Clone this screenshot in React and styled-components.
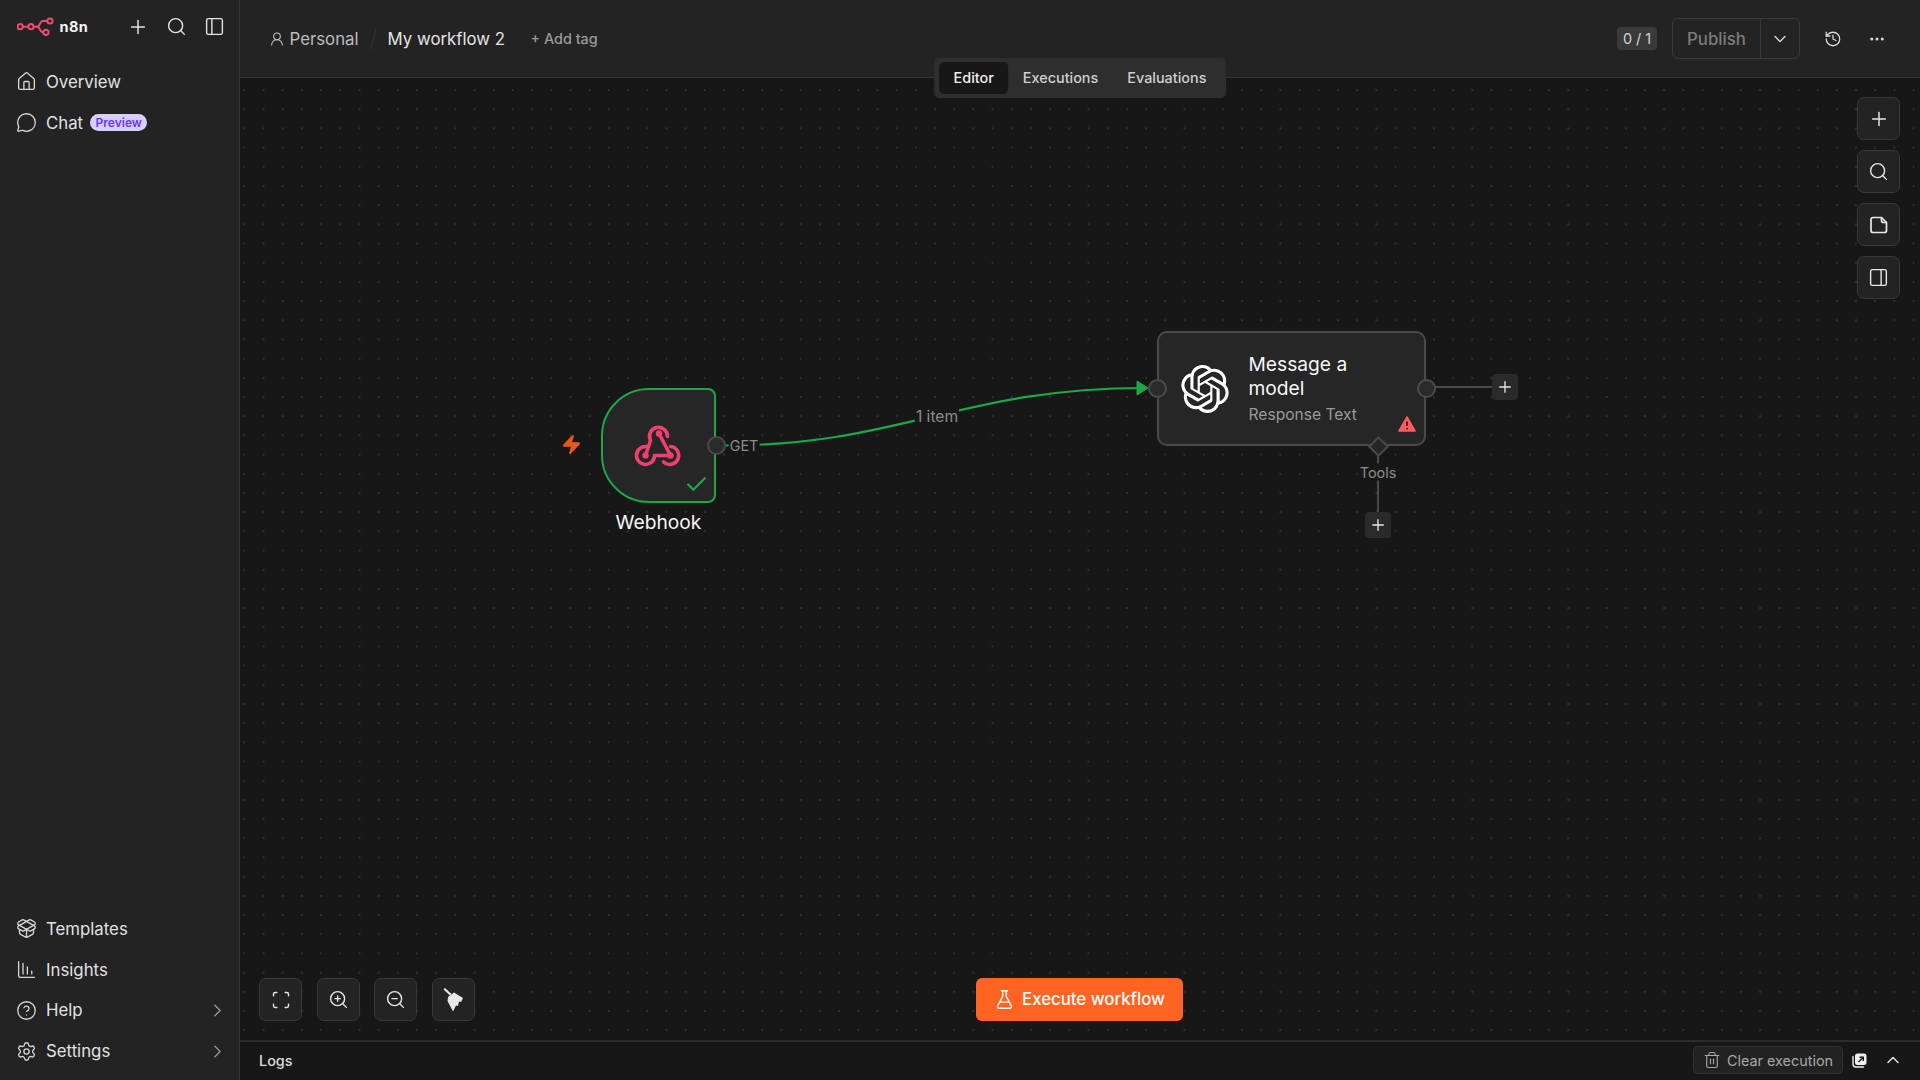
import React from 'react';
import styled, { createGlobalStyle } from 'styled-components';
import {
  House, MessageCircle, PackageOpen, ChartColumnDecreasing, CircleHelp, Settings, ChevronRight,
  Plus, Search, PanelLeft, PanelRight, UserRound, History, Ellipsis, ChevronDown, ChevronUp,
  Scan, ZoomIn, ZoomOut, FlaskConical, Trash2, Check, Zap,
} from 'lucide-react';
import { SiOpenai } from 'react-icons/si';

const GlobalStyle = createGlobalStyle`
  html, body { margin: 0; padding: 0; height: 100%; background: #171717; }
  #root { height: 100%; }
  * { box-sizing: border-box; }
  body { font-family: Inter, "Liberation Sans", sans-serif; color: #f0f0f0; }
`;

const Shell = styled.div`
  display: flex;
  width: 1920px;
  height: 1080px;
  overflow: hidden;
`;

const Sidebar = styled.aside`
  width: 240px;
  flex: none;
  display: flex;
  flex-direction: column;
  padding-bottom: 8.5px;
  background: #232323;
  border-right: 1px solid #333;
`;

const Brand = styled.div`
  display: flex;
  align-items: center;
  height: 53px;
  padding: 0 5px 0 17px;
  color: #e4e4e4;
`;

const BrandName = styled.span`
  font-size: 14.5px;
  font-weight: 700;
  letter-spacing: 0.4px;
  color: #f4f4f4;
  margin-left: 5.5px;
  flex: 1;
`;

const BrandTool = styled.span`
  display: flex;
  width: 38.5px;
  justify-content: center;
`;

const NavList = styled.nav`
  display: flex;
  flex-direction: column;
  margin-top: ${(p) => p.$top || 0}px;
`;

const Spacer = styled.div`
  flex: 1;
`;

const NavItem = styled.div`
  display: flex;
  align-items: center;
  height: 40.8px;
  padding: 0 11px 0 15.5px;
  gap: 9.5px;
  font-size: 16.8px;
  color: #e2e2e2;
  svg { flex: none; color: #d6d6d6; }
`;

const NavLabel = styled.span`
  flex: ${(p) => (p.$grow ? 1 : 'none')};
`;

const PreviewPill = styled.span`
  font-size: 12px;
  font-weight: 600;
  line-height: 17px;
  padding: 0 5.5px;
  margin-left: -2.5px;
  border-radius: 9px;
  background: #d9cfff;
  color: #6b36f5;
`;

const Main = styled.div`
  flex: 1;
  min-width: 0;
  display: flex;
  flex-direction: column;
  position: relative;
`;

const Header = styled.header`
  height: 78px;
  flex: none;
  display: flex;
  align-items: center;
  padding: 0 34px 0 29px;
  background: #232323;
  border-bottom: 1px solid #333;
`;

const Crumb = styled.span`
  display: flex;
  align-items: center;
  gap: 4.5px;
  font-size: 16.8px;
  color: ${(p) => p.$color || '#bcbcbc'};
  svg { color: #c4c4c4; }
`;

const Slash = styled.span`
  width: 1px;
  height: 22px;
  margin: 0 14px;
  background: #333;
  transform: rotate(14deg);
`;

const AddTag = styled.span`
  margin-left: 25.5px;
  font-size: 14.4px;
  font-weight: 500;
  color: #9a9a9a;
`;

const HeaderEnd = styled.div`
  margin-left: auto;
  display: flex;
  align-items: center;
`;

const Counter = styled.span`
  width: 40px;
  height: 23px;
  display: flex;
  align-items: center;
  justify-content: center;
  border-radius: 4px;
  background: #3a3a3a;
  font-size: 14.4px;
  color: #d4d4d4;
  margin-right: 15px;
`;

const PublishGroup = styled.div`
  display: flex;
  height: 41px;
  width: 128px;
  border: 1px solid #3a3a3a;
  border-radius: 6px;
`;

const PublishLabel = styled.span`
  width: 88px;
  display: flex;
  align-items: center;
  justify-content: center;
  border-right: 1px solid #3a3a3a;
  font-size: 16.8px;
  font-weight: 500;
  color: #7c7c7c;
`;

const PublishCaret = styled.span`
  flex: 1;
  display: flex;
  align-items: center;
  justify-content: center;
  color: #d4d4d4;
`;

const HeaderIcon = styled.span`
  display: flex;
  margin-left: ${(p) => p.$left}px;
  color: #dcdcdc;
`;

const ViewTabs = styled.div`
  position: absolute;
  top: 58px;
  left: 50%;
  transform: translateX(-50%);
  z-index: 5;
  display: flex;
  align-items: center;
  height: 40px;
  padding: 0 5px;
  border-radius: 5px;
  background: #2e2e2e;
`;

const ViewTab = styled.span`
  height: 32px;
  padding: 0 14.5px 2px;
  display: flex;
  align-items: center;
  border-radius: 5px;
  font-size: 14.4px;
  font-weight: 500;
  color: ${(p) => (p.$active ? '#f0f0f0' : '#d0d0d0')};
  background: ${(p) => (p.$active ? '#171717' : 'transparent')};
`;

const Canvas = styled.main`
  flex: 1;
  position: relative;
  overflow: hidden;
  background-color: #171717;
  background-image: radial-gradient(circle at center, #363636 0.6px, transparent 1px);
  background-size: 19.2px 19.2px;
  background-position: -5.3px 2.4px;
`;

const Edges = styled.svg`
  position: absolute;
  inset: 0;
  width: 100%;
  height: 100%;
`;

const ToolColumn = styled.div`
  position: absolute;
  top: 19px;
  right: 20px;
  display: flex;
  flex-direction: column;
  gap: 10px;
`;

const ToolRow = styled.div`
  position: absolute;
  left: 19px;
  bottom: 19px;
  display: flex;
  gap: 14.7px;
`;

const ToolButton = styled.span`
  width: 43px;
  height: 43px;
  display: flex;
  align-items: center;
  justify-content: center;
  border: 1px solid #383838;
  border-radius: 7px;
  background: #232323;
  color: #e8e8e8;
`;

const ExecuteButton = styled.span`
  position: absolute;
  left: 736px;
  bottom: 19px;
  width: 207px;
  height: 43px;
  display: flex;
  align-items: center;
  justify-content: center;
  gap: 7px;
  padding-bottom: 1px;
  border-radius: 6px;
  background: #ff6423;
  color: #fff;
  font-size: 16.8px;
  font-weight: 500;
`;

const TriggerBolt = styled.span`
  position: absolute;
  left: 321px;
  top: 356px;
  display: flex;
  color: #e8591c;
`;

const WebhookNode = styled.div`
  position: absolute;
  left: 361px;
  top: 310px;
  width: 115px;
  height: 115px;
  display: flex;
  align-items: center;
  justify-content: center;
  border: 2.4px solid #1ca84a;
  border-radius: 48px 8px 8px 48px;
  background: #262626;
`;

const NodeLabel = styled.span`
  position: absolute;
  left: 361px;
  top: 432px;
  width: 115px;
  text-align: center;
  font-size: 19.2px;
  font-weight: 400;
  color: #f6f6f6;
  white-space: nowrap;
`;

const NodeCheck = styled.span`
  position: absolute;
  right: 5px;
  bottom: 4px;
  display: flex;
  color: #1ca84a;
`;

const ModelNode = styled.div`
  position: absolute;
  left: 917px;
  top: 253px;
  width: 269px;
  height: 115px;
  display: flex;
  align-items: center;
  padding: 0 16px 0 22px;
  gap: 19.5px;
  border: 2.4px solid #4a4a4a;
  border-radius: 10px;
  background: #262626;
  color: #fff;
`;

const NodeText = styled.div`
  display: flex;
  flex-direction: column;
  padding-top: 2px;
`;

const NodeTitle = styled.span`
  font-size: 19.2px;
  line-height: 24px;
  font-weight: 400;
  color: #f6f6f6;
`;

const NodeSub = styled.span`
  margin-top: 3px;
  font-size: 15.6px;
  line-height: 24px;
  color: #9a9a9a;
`;

const WarnBadge = styled.span`
  position: absolute;
  right: 8px;
  bottom: 12px;
  display: flex;
`;

const Handle = styled.span`
  position: absolute;
  left: ${(p) => p.$x - 9.5}px;
  top: ${(p) => p.$y - 9.5}px;
  width: 19px;
  height: 19px;
  border: 2px solid #4a4a4a;
  border-radius: 50%;
  background: #2a2a2a;
`;

const Diamond = styled.span`
  position: absolute;
  left: ${(p) => p.$x - 7.5}px;
  top: ${(p) => p.$y - 7.5}px;
  width: 15px;
  height: 15px;
  border: 2px solid #4a4a4a;
  background: #262626;
  transform: rotate(45deg);
`;

const EdgeLabel = styled.span`
  position: absolute;
  left: ${(p) => p.$x}px;
  top: ${(p) => p.$y}px;
  transform: translate(-50%, -50%);
  font-size: ${(p) => p.$size || 14.4}px;
  padding: 0 1px;
  color: #8c8c8c;
  background: #171717;
  white-space: nowrap;
`;

const AddNode = styled.span`
  position: absolute;
  left: ${(p) => p.$x}px;
  top: ${(p) => p.$y}px;
  width: 26px;
  height: 26px;
  display: flex;
  align-items: center;
  justify-content: center;
  border-radius: 4px;
  background: #2a2a2a;
  color: #e8e8e8;
`;

const LogsBar = styled.footer`
  height: 40px;
  flex: none;
  display: flex;
  align-items: center;
  padding: 0 17px 2px 19px;
  background: #171717;
  border-top: 2px solid #2b2b2b;
`;

const LogsTitle = styled.span`
  font-size: 14.4px;
  font-weight: 500;
  color: #dcdcdc;
  margin-right: auto;
`;

const ClearButton = styled.span`
  width: 150px;
  height: 28px;
  display: flex;
  align-items: center;
  justify-content: center;
  gap: 6px;
  border: 1px solid #333;
  border-radius: 5px;
  background: #222;
  font-size: 14.4px;
  color: #a8a8a8;
  margin-right: 9px;
`;

const LogsIcon = styled.span`
  display: flex;
  margin-left: ${(p) => p.$left || 0}px;
  color: #e4e4e4;
`;

const Logo = () => (
  <svg width="37" height="20" viewBox="0 0 37 20" fill="none" stroke="#ea4b71" strokeWidth="2">
    <circle cx="3.2" cy="9.7" r="2.6" />
    <circle cx="14" cy="9.7" r="2.6" />
    <circle cx="33" cy="4" r="2.6" />
    <circle cx="29" cy="15.3" r="2.6" />
    <path d="M5.8 9.7h5.6M16.6 9.7h3.4c3.4 0 2.4-5.7 6-5.7h4.4M20 9.7c3.4 0 2.4 5.6 6 5.6h.4" />
  </svg>
);

const WebhookGlyph = () => (
  <svg width="70" height="60" viewBox="-1.5 1 70 60" fill="none" stroke="#f0406f" strokeWidth="3.6" strokeLinecap="round" strokeLinejoin="round">
    <path d="M20 40.5 25 25.5A9 9 0 1 1 42 21.5" />
    <path d="M33.5 18.5 45 40.5" />
    <path d="M21 31.5A9 9 0 1 0 29 40.5H45" />
    <path d="M45 31.5A9 9 0 1 1 38 47" />
    <circle cx="33.5" cy="18.5" r="3.2" fill="#f0406f" stroke="none" />
    <circle cx="20" cy="40.5" r="3.2" fill="#f0406f" stroke="none" />
    <circle cx="45" cy="40.5" r="3.2" fill="#f0406f" stroke="none" />
  </svg>
);

const NoteGlyph = () => (
  <svg width="18" height="18" viewBox="0 0 18 18" fill="none" stroke="currentColor" strokeWidth="1.7" strokeLinejoin="round">
    <path d="M3 1.5h8.5l5 5v8a2 2 0 0 1-2 2H3a2 2 0 0 1-2-2v-11a2 2 0 0 1 2-2z" />
    <path d="M11.5 1.5v3a2 2 0 0 0 2 2h3" />
  </svg>
);

const BroomGlyph = () => (
  <svg width="21" height="24" viewBox="0 0 21 24" fill="currentColor">
    <path d="M.5 1.5 2 0l6.5 6-1.5 1.5z" />
    <path d="M5 9 11 4.5 20 10l-2 4-2-.5-1 4.5-2-.5-3 6-5.5-10.5z" />
  </svg>
);

const PopOutGlyph = () => (
  <svg width="15" height="15" viewBox="0 0 15 15">
    <path d="M1 3.5v7.5a3 3 0 0 0 3 3h7.5" fill="none" stroke="#eee" strokeWidth="1.4" strokeLinecap="round" />
    <rect x="3" y="0.5" width="11.5" height="11.5" rx="2.5" fill="#eee" />
    <path d="M6.5 9 11 4.5M7.5 4.2h3.8V8" fill="none" stroke="#171717" strokeWidth="1.4" />
  </svg>
);

const WarnGlyph = () => (
  <svg width="18" height="16" viewBox="0 0 18 16">
    <path d="M9 1 17 15H1z" fill="#ff5a5f" stroke="#ff5a5f" strokeWidth="1.6" strokeLinejoin="round" />
    <path d="M9 5.5v4.5M9 12v1.2" stroke="#262626" strokeWidth="1.8" />
  </svg>
);

const iconProps = { size: 21, strokeWidth: 1.5 };

const topNav = [
  { label: 'Overview', Icon: House },
  { label: 'Chat', Icon: MessageCircle, pill: 'Preview' },
];

const bottomNav = [
  { label: 'Templates', Icon: PackageOpen },
  { label: 'Insights', Icon: ChartColumnDecreasing },
  { label: 'Help', Icon: CircleHelp, more: true },
  { label: 'Settings', Icon: Settings, more: true },
];

const renderNav = ({ label, Icon, pill, more }) => (
  <NavItem key={label}>
    <Icon {...iconProps} />
    <NavLabel $grow={more}>{label}</NavLabel>
    {pill && <PreviewPill>{pill}</PreviewPill>}
    {more && <ChevronRight size={21} strokeWidth={1.5} color="#9a9a9a" />}
  </NavItem>
);

export default function App() {
  return (
    <>
      <GlobalStyle />
      <Shell>
        <Sidebar>
          <Brand>
            <Logo />
            <BrandName>n8n</BrandName>
            <BrandTool><Plus size={22} strokeWidth={1.6} /></BrandTool>
            <BrandTool><Search size={21} strokeWidth={1.6} /></BrandTool>
            <BrandTool><PanelLeft size={21} strokeWidth={1.6} /></BrandTool>
          </Brand>
          <NavList $top={8.5}>{topNav.map(renderNav)}</NavList>
          <Spacer />
          <NavList>{bottomNav.map(renderNav)}</NavList>
        </Sidebar>
        <Main>
          <Header>
            <Crumb><UserRound size={16} strokeWidth={1.6} />Personal</Crumb>
            <Slash />
            <Crumb $color="#e4e4e4">My workflow 2</Crumb>
            <AddTag>+ Add tag</AddTag>
            <HeaderEnd>
              <Counter>0 / 1</Counter>
              <PublishGroup>
                <PublishLabel>Publish</PublishLabel>
                <PublishCaret><ChevronDown size={20} strokeWidth={1.7} /></PublishCaret>
              </PublishGroup>
              <HeaderIcon $left={24}><History size={18} strokeWidth={1.7} /></HeaderIcon>
              <HeaderIcon $left={26}><Ellipsis size={18} strokeWidth={2} /></HeaderIcon>
            </HeaderEnd>
          </Header>
          <ViewTabs>
            <ViewTab $active>Editor</ViewTab>
            <ViewTab>Executions</ViewTab>
            <ViewTab>Evaluations</ViewTab>
          </ViewTabs>
          <Canvas>
            <Edges>
              <path d="M485 367.5C660 367.5 720 310 905 310" fill="none" stroke="#1ca84a" strokeWidth="2.2" />
              <path d="M897 303 908 310 897 317z" fill="#1ca84a" stroke="#1ca84a" strokeWidth="1" strokeLinejoin="round" />
              <path d="M1195 309H1254M1138 378V436" stroke="#4a4a4a" strokeWidth="2" fill="none" />
            </Edges>
            <TriggerBolt><Zap size={21} fill="currentColor" strokeWidth={1.4} /></TriggerBolt>
            <WebhookNode>
              <WebhookGlyph />
              <NodeCheck><Check size={25} strokeWidth={2.2} /></NodeCheck>
            </WebhookNode>
            <NodeLabel>Webhook</NodeLabel>
            <Handle $x={476} $y={367.5} />
            <EdgeLabel $x={504} $y={366.5}>GET</EdgeLabel>
            <EdgeLabel $x={697} $y={338} $size={15.6}>1 item</EdgeLabel>
            <ModelNode>
              <SiOpenai size={48} />
              <NodeText>
                <NodeTitle>Message a<br />model</NodeTitle>
                <NodeSub>Response Text</NodeSub>
              </NodeText>
              <WarnBadge><WarnGlyph /></WarnBadge>
            </ModelNode>
            <Handle $x={917} $y={310} />
            <Handle $x={1186} $y={310} />
            <Diamond $x={1138} $y={368} />
            <EdgeLabel $x={1138} $y={394}>Tools</EdgeLabel>
            <AddNode $x={1252} $y={296}><Plus size={18} strokeWidth={1.8} /></AddNode>
            <AddNode $x={1125} $y={434}><Plus size={18} strokeWidth={1.8} /></AddNode>
            <ToolColumn>
              <ToolButton><Plus size={22} strokeWidth={1.6} /></ToolButton>
              <ToolButton><Search size={21} strokeWidth={1.6} /></ToolButton>
              <ToolButton><NoteGlyph /></ToolButton>
              <ToolButton><PanelRight size={21} strokeWidth={1.6} /></ToolButton>
            </ToolColumn>
            <ToolRow>
              <ToolButton><Scan size={20} strokeWidth={1.7} /></ToolButton>
              <ToolButton><ZoomIn size={21} strokeWidth={1.6} /></ToolButton>
              <ToolButton><ZoomOut size={21} strokeWidth={1.6} /></ToolButton>
              <ToolButton><BroomGlyph /></ToolButton>
            </ToolRow>
            <ExecuteButton><FlaskConical size={21} strokeWidth={1.5} />Execute workflow</ExecuteButton>
          </Canvas>
          <LogsBar>
            <LogsTitle>Logs</LogsTitle>
            <ClearButton><Trash2 size={18} strokeWidth={1.5} />Clear execution</ClearButton>
            <LogsIcon><PopOutGlyph /></LogsIcon>
            <LogsIcon $left={16}><ChevronUp size={20} strokeWidth={1.7} /></LogsIcon>
          </LogsBar>
        </Main>
      </Shell>
    </>
  );
}
